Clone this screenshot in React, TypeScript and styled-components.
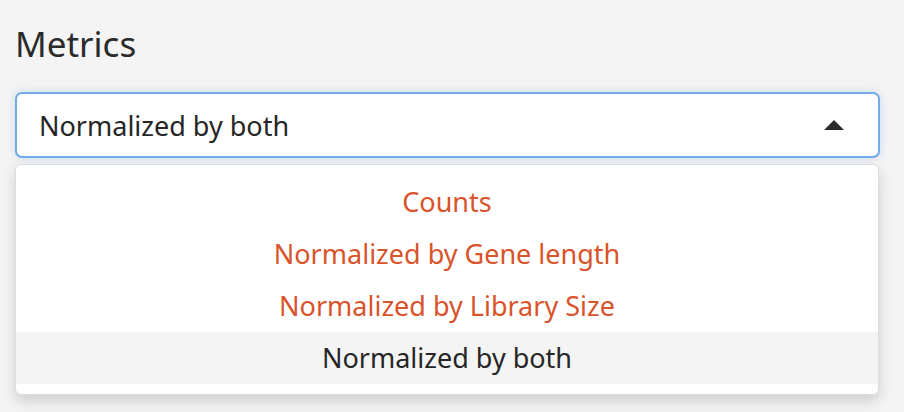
import React, { useState } from 'react';
import styled, { createGlobalStyle } from 'styled-components';

const Global = createGlobalStyle`
  html, body { margin: 0; padding: 0; background: #f4f4f4; }
  body { font-family: 'Noto Sans', 'Open Sans', sans-serif; overflow: hidden; }
`;

const Page = styled.div`
  padding: 20px 24px 0 15px;
  height: 412px;
  box-sizing: border-box;
`;

const Title = styled.h2`
  margin: 0 0 24px;
  font-size: 35px;
  font-weight: 400;
  color: #2b2b2b;
  line-height: 48px;
`;

const Field = styled.div`
  position: relative;
`;

const SelectBox = styled.div`
  height: 66px;
  box-sizing: border-box;
  display: flex;
  align-items: center;
  justify-content: space-between;
  padding: 0 34px 0 22px;
  background: #fff;
  border: 2px solid #74aae6;
  border-radius: 7px;
  box-shadow: 0 0 8px rgba(116, 170, 230, 0.35);
  font-size: 27px;
  color: #262626;
`;

const Caret = styled.span`
  width: 0;
  height: 0;
  border-left: 10px solid transparent;
  border-right: 10px solid transparent;
  border-bottom: 10px solid #2b2b2b;
`;

const Menu = styled.ul`
  position: absolute;
  top: 72px;
  left: 0;
  right: 1px;
  margin: 0;
  padding: 11px 0 10px;
  list-style: none;
  background: #fff;
  border: 1px solid #dcdcdc;
  border-radius: 6px;
  box-shadow: 0 6px 14px rgba(0, 0, 0, 0.16);
`;

const Option = styled.li<{ $active: boolean }>`
  height: 52px;
  display: flex;
  align-items: center;
  justify-content: center;
  padding-bottom: 2px;
  box-sizing: border-box;
  font-size: 27px;
  color: ${p => (p.$active ? '#262626' : '#d9532b')};
  background: ${p => (p.$active ? '#f4f4f4' : 'transparent')};
`;

const options = ['Counts', 'Normalized by Gene length', 'Normalized by Library Size', 'Normalized by both'];

export default function App() {
  const [value, setValue] = useState('Normalized by both');
  return (
    <Page>
      <Global />
      <Title>Metrics</Title>
      <Field>
        <SelectBox>
          <span>{value}</span>
          <Caret />
        </SelectBox>
        <Menu>
          {options.map(o => (
            <Option key={o} $active={o === value} onClick={() => setValue(o)}>{o}</Option>
          ))}
        </Menu>
      </Field>
    </Page>
  );
}
